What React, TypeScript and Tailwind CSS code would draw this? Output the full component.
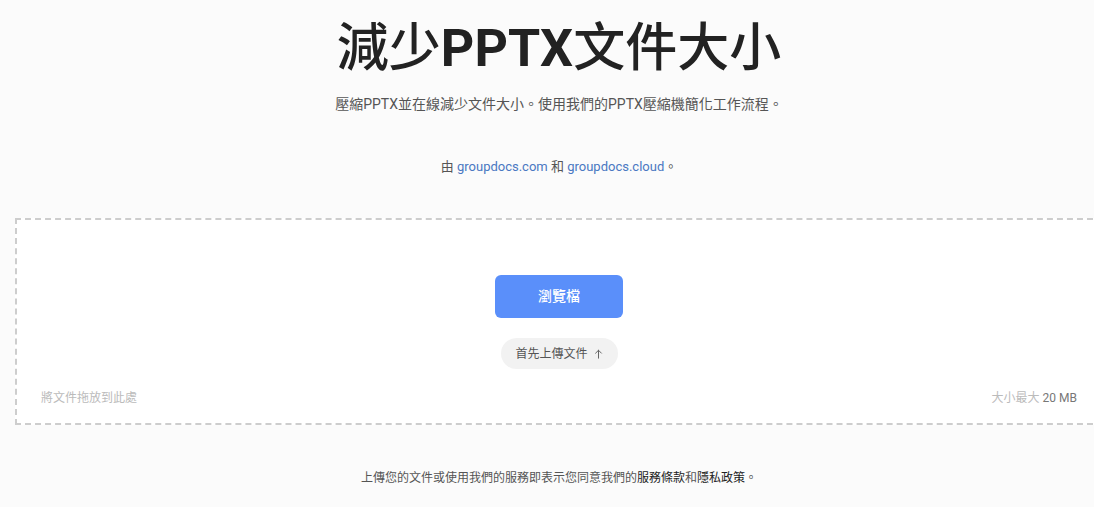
const font = 'font-["Roboto","Noto_Sans_CJK_TC",sans-serif]'

function ArrowUp() {
  return (
    <svg viewBox="0 0 10 12" className="ml-1.5 h-[10px] w-[9px]" fill="none" stroke="#666" strokeWidth={1.2} strokeLinecap="round" strokeLinejoin="round">
      <path d="M5 11V1.5M1.5 5L5 1.5 8.5 5" />
    </svg>
  )
}

export default function App() {
  return (
    <div className={`min-h-screen w-full overflow-hidden bg-[#fbfbfb] ${font}`}>
      <div className="flex w-[1118px] flex-col items-center">
        <h1 className="pt-[18px] text-[52px] leading-[62px] font-medium text-[#222]">
          減少<span className="font-bold">PPTX</span>文件大小
        </h1>
        <p className="mt-[14px] text-[14px] leading-5 text-[#555]">
          壓縮PPTX並在線減少文件大小。使用我們的PPTX壓縮機簡化工作流程。
        </p>
        <p className="mt-[43px] text-[13px] leading-5 text-[#555]">
          由 <a className="text-[#4a78c2]">groupdocs.com</a> 和{' '}
          <a className="text-[#4a78c2]">groupdocs.cloud</a>。
        </p>

        <div className="mt-[41px] flex h-[207px] w-[1088px] flex-col items-center border-2 border-dashed border-[#cdcdcd] bg-white px-6 pt-[55px] pb-[17px]">
          <button className="h-[43px] w-[128px] rounded-md bg-[#5a8ffa] text-[14px] font-medium text-white">
            瀏覽檔
          </button>
          <div className="mt-5 flex h-[31px] w-[117px] items-center justify-center rounded-full bg-[#f2f2f2] text-[12px] text-[#555]">
            首先上傳文件
            <ArrowUp />
          </div>
          <div className="mt-[21px] flex w-full justify-between text-[12px] leading-4">
            <span className="text-[#bbb]">將文件拖放到此處</span>
            <span className="text-[#bbb]">
              大小最大 <span className="text-[#777]">20 MB</span>
            </span>
          </div>
        </div>

        <p className="mt-[45px] text-[12px] leading-4 text-[#555]">
          上傳您的文件或使用我們的服務即表示您同意我們的
          <a className="text-[#222]">服務條款</a>和<a className="text-[#222]">隱私政策</a>。
        </p>
      </div>
    </div>
  )
}
